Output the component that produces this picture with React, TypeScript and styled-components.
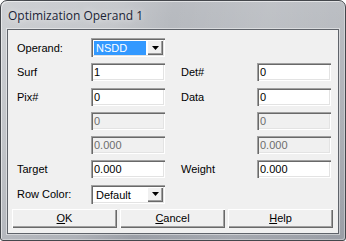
import React, { FC } from "react";
import styled, { createGlobalStyle } from "styled-components";

const GlobalStyle = createGlobalStyle`
  html, body {
    margin: 0;
    padding: 0;
    background: #ffffff;
  }
  body {
    font-family: "Liberation Sans", Arial, sans-serif;
    font-size: 11px;
  }
`;

const sunken = `
  box-shadow: inset 1px 1px #a0a0a0, inset 2px 2px #696969,
    inset -1px -1px #ffffff, inset -2px -2px #e3e3e3;
`;

const raised = `
  box-shadow: inset 1px 1px #ffffff, inset -1px -1px #696969,
    inset -2px -2px #a0a0a0;
`;

type Field = { label?: string; value: string; disabled?: boolean };

const rows: [Field, Field][] = [
  [{ label: "Surf", value: "1" }, { label: "Det#", value: "0" }],
  [{ label: "Pix#", value: "0" }, { label: "Data", value: "0" }],
  [{ value: "0", disabled: true }, { value: "0", disabled: true }],
  [{ value: "0.000", disabled: true }, { value: "0.000", disabled: true }],
  [{ label: "Target", value: "0.000" }, { label: "Weight", value: "0.000" }],
];

const Arrow: FC = () => (
  <svg width="7" height="4" viewBox="0 0 7 4">
    <path d="M0 0h7L3.5 4z" fill="#000" />
  </svg>
);

const Combo: FC<{ value: string; selected?: boolean }> = ({ value, selected }) => (
  <ComboBox>
    <ComboValue selected={selected}>{value}</ComboValue>
    <DropButton>
      <Arrow />
    </DropButton>
  </ComboBox>
);

const Accel: FC<{ text: string }> = ({ text }) => (
  <>
    <u>{text[0]}</u>
    {text.slice(1)}
  </>
);

export default function App() {
  return (
    <>
      <GlobalStyle />
      <Window>
        <TitleBar>Optimization Operand 1</TitleBar>
        <Client>
          <Form>
            <Label>Operand:</Label>
            <Combo value="NSDD" selected />
            <span />
            <span />
            {rows.map(([a, b], i) => (
              <React.Fragment key={i}>
                <Label>{a.label}</Label>
                <Input disabled={a.disabled}>{a.value}</Input>
                <RightLabel>{b.label}</RightLabel>
                <Input disabled={b.disabled}>{b.value}</Input>
              </React.Fragment>
            ))}
            <Label>Row Color:</Label>
            <Combo value="Default" />
          </Form>
          <Buttons>
            <Button>
              <Accel text="OK" />
            </Button>
            <Button>
              <Accel text="Cancel" />
            </Button>
            <Button>
              <Accel text="Help" />
            </Button>
          </Buttons>
        </Client>
      </Window>
    </>
  );
}

const Window = styled.div`
  width: 346px;
  height: 241px;
  box-sizing: border-box;
  display: flex;
  flex-direction: column;
  border: 1px solid #44474c;
  border-radius: 7px 7px 3px 3px;
  background: linear-gradient(
      100deg,
      rgba(255, 255, 255, 0.3) 0%,
      rgba(255, 255, 255, 0.2) 30%,
      rgba(255, 255, 255, 0) 45%,
      rgba(255, 255, 255, 0.1) 70%,
      rgba(255, 255, 255, 0) 100%
    ),
    linear-gradient(180deg, #b9bcc1 0%, #a9adb3 60%, #9a9ea6 100%);
  box-shadow: inset 1px 1px rgba(255, 255, 255, 0.55),
    inset -1px -1px rgba(255, 255, 255, 0.35);
  overflow: hidden;
`;

const TitleBar = styled.div`
  height: 28px;
  flex: none;
  padding-left: 7px;
  display: flex;
  align-items: center;
  font-family: "Open Sans", "Noto Sans", sans-serif;
  font-size: 12px;
  color: #1b2436;
  text-shadow: 0 0 6px rgba(255, 255, 255, 0.9);
`;

const Client = styled.div`
  flex: 1;
  margin: 0 6px 6px 6px;
  border: 1px solid #5f636a;
  box-shadow: 0 0 0 1px rgba(255, 255, 255, 0.45);
  background: #f0f0f0;
  display: flex;
  flex-direction: column;
  padding: 8px 4px 0 4px;
`;

const Form = styled.div`
  display: grid;
  grid-template-columns: 74px 74px 92px 74px;
  grid-auto-rows: 18px;
  grid-template-rows: 19px;
  row-gap: 6.3px;
  padding-left: 5px;
  color: #000;
`;

const Label = styled.div`
  display: flex;
  align-items: center;
  white-space: nowrap;
`;

const RightLabel = styled(Label)`
  padding-left: 16px;
`;

const Input = styled.div<{ disabled?: boolean }>`
  box-sizing: border-box;
  height: 18px;
  display: flex;
  align-items: center;
  padding: 0 3px;
  background: ${({ disabled }) => (disabled ? "#f0f0f0" : "#ffffff")};
  color: ${({ disabled }) => (disabled ? "#6d6d6d" : "#000000")};
  ${sunken}
`;

const ComboBox = styled.div`
  box-sizing: border-box;
  height: 19px;
  display: flex;
  align-items: stretch;
  padding: 2px;
  background: #ffffff;
  ${sunken}
`;

const ComboValue = styled.div<{ selected?: boolean }>`
  flex: 1;
  display: flex;
  align-items: center;
  padding-left: 2px;
  margin: 1px 1px 0 1px;
  background: ${({ selected }) => (selected ? "#3399ff" : "transparent")};
  color: ${({ selected }) => (selected ? "#ffffff" : "#000000")};
`;

const DropButton = styled.div`
  width: 16px;
  flex: none;
  display: flex;
  align-items: center;
  justify-content: center;
  background: #f0f0f0;
  ${raised}
`;

const Buttons = styled.div`
  display: grid;
  grid-template-columns: repeat(3, 105px);
  column-gap: 3px;
  margin-top: 6px;
`;

const Button = styled.div`
  height: 19px;
  display: flex;
  align-items: center;
  justify-content: center;
  background: #f0f0f0;
  color: #000;
  ${raised}

  u {
    text-decoration: underline;
    text-underline-offset: 1px;
  }
`;
